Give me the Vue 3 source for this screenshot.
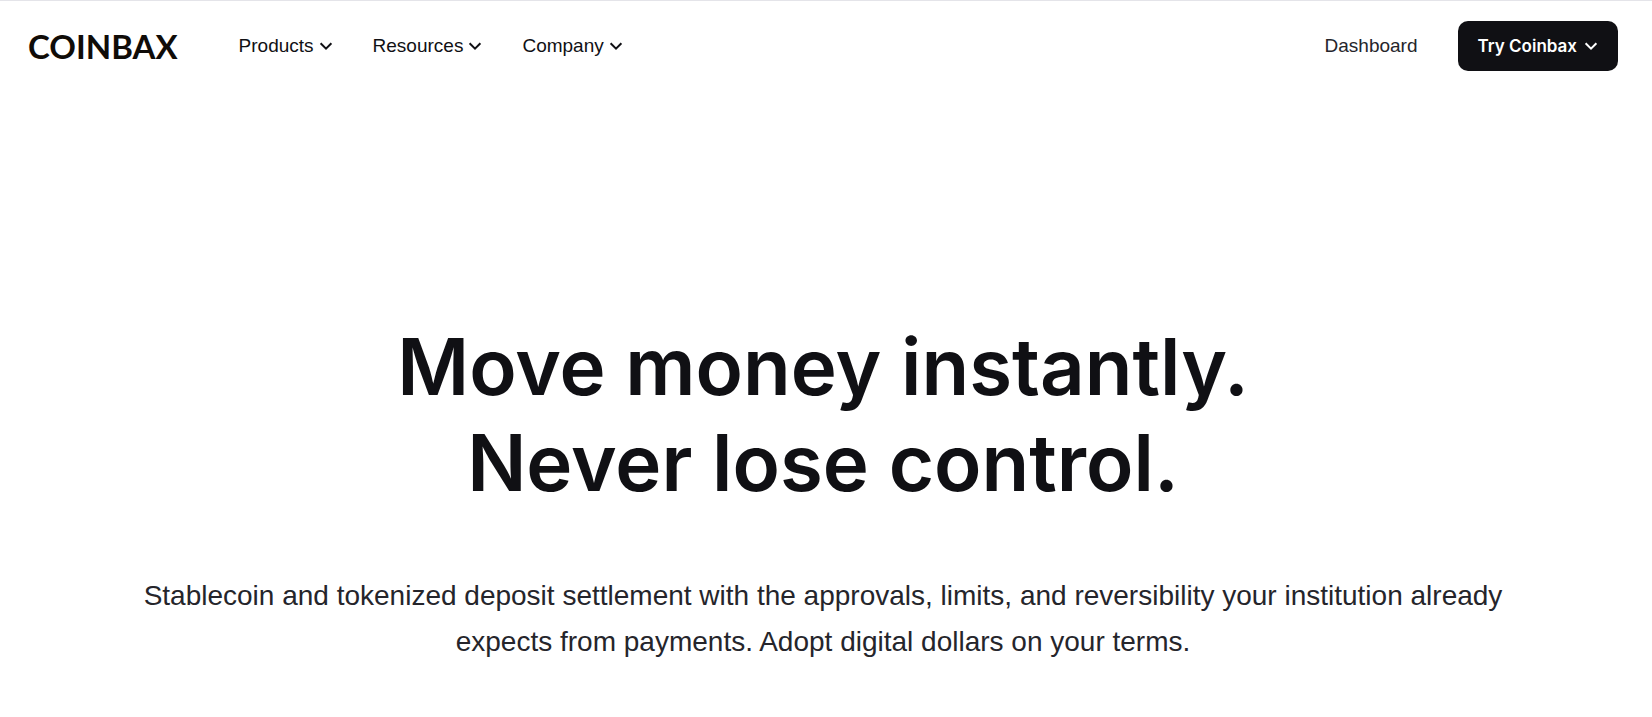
<script setup>
const menus = ['Products', 'Resources', 'Company']
</script>

<template>
  <div class="page">
    <header class="bar">
      <a class="logo" href="#">COINBAX</a>
      <nav class="menus" aria-label="Main">
        <button v-for="menu in menus" :key="menu" class="menu" type="button">
          {{ menu }}
          <svg class="chevron" viewBox="0 0 14 14" aria-hidden="true"><path d="M1.6 4.2 7 9.6l5.4-5.4" /></svg>
        </button>
      </nav>
      <div class="actions">
        <a class="dashboard" href="#">Dashboard</a>
        <button class="cta" type="button">
          Try Coinbax
          <svg class="chevron" viewBox="0 0 14 14" aria-hidden="true"><path d="M1.6 4.2 7 9.6l5.4-5.4" /></svg>
        </button>
      </div>
    </header>
    <main class="hero">
      <h1>Move money instantly.<br />Never lose control.</h1>
      <p>Stablecoin and tokenized deposit settlement with the approvals, limits, and reversibility your institution already expects from payments. Adopt digital dollars on your terms.</p>
    </main>
  </div>
</template>

<style>
body {
  margin: 0;
  background: #fff;
}
</style>

<style scoped>
.page {
  border-top: 1px solid #e4e4e9;
  font-family: "Liberation Sans", Arial, sans-serif;
  color: #101014;
}
.bar {
  display: flex;
  align-items: center;
  padding: 20px 34px 20px 28px;
}
.logo {
  font: 700 33px/50px Lato, sans-serif;
  color: #100c08;
  text-decoration: none;
}
.menus {
  display: flex;
  gap: 40px;
  margin-left: 61px;
}
.menu,
.cta {
  display: flex;
  align-items: center;
  border: 0;
  padding: 0;
  background: none;
  color: inherit;
  cursor: pointer;
}
.menu {
  gap: 5px;
  font: 400 19px/24px "Liberation Sans", Arial, sans-serif;
}
.chevron {
  width: 14px;
  height: 14px;
  fill: none;
  stroke: currentColor;
  stroke-width: 2;
}
.actions {
  display: flex;
  align-items: center;
  gap: 40px;
  margin-left: auto;
}
.dashboard {
  font-size: 19px;
  line-height: 24px;
  color: #25252b;
  text-decoration: none;
}
.cta {
  gap: 7px;
  padding: 13px 20px;
  border-radius: 10px;
  background: #101014;
  color: #fff;
  font: 600 17px/24px Inter, sans-serif;
}
.hero {
  padding: 228px 126px 40px 120px;
  text-align: center;
}
h1 {
  margin: 0;
  font: 600 78px/96px Inter, sans-serif;
}
p {
  margin: 62px auto 0;
  max-width: 1400px;
  font-size: 28px;
  line-height: 46px;
  color: #25252b;
}
</style>
